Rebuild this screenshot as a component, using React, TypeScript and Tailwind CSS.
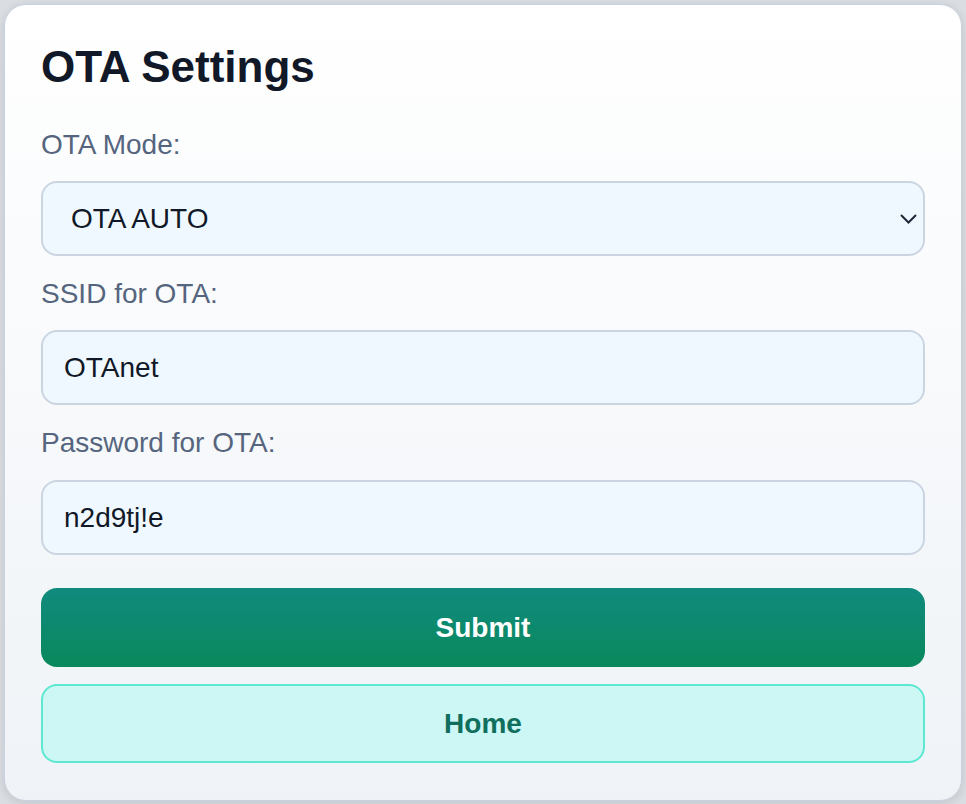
import { useState } from 'react'

export default function App() {
  const [mode, setMode] = useState('auto')
  const [ssid, setSsid] = useState('OTAnet')
  const [pass, setPass] = useState('n2d9tj!e')

  return (
    <div className="min-h-screen bg-[#dadde1] p-[4px] font-['Liberation_Sans',Arial,sans-serif]">
      <div className="flex flex-col rounded-[22px] border border-[#c9d3df] bg-gradient-to-b from-white to-[#eff3f7] px-[36px] pt-[36px] pb-[37px] shadow-[0_2px_10px_rgba(15,23,42,0.12)]">
        <h1 className="mb-[36px] text-[44px] leading-[52px] font-bold text-[#111827]">OTA Settings</h1>

        <label className="mb-[20px] text-[28px] leading-[32px] text-[#56657e]">OTA Mode:</label>
        <div className="relative mb-[22px]">
          <select
            value={mode}
            onChange={(e) => setMode(e.target.value)}
            className="h-[75px] w-full appearance-none rounded-[16px] border-2 border-[#cbd5e1] bg-[#f0f8ff] pl-[28px] text-[28px] text-[#111827] outline-none"
          >
            <option value="auto">OTA AUTO</option>
            <option value="manual">OTA MANUAL</option>
            <option value="off">OTA OFF</option>
          </select>
          <svg
            className="pointer-events-none absolute right-[8px] top-[29px] h-[17px] w-[17px] text-[#1f2937]"
            viewBox="0 0 17 17"
            fill="none"
            stroke="currentColor"
            strokeWidth="2"
          >
            <path d="M1 5l7.5 7.5L16 5" />
          </svg>
        </div>

        <label className="mb-[20px] text-[28px] leading-[32px] text-[#56657e]">SSID for OTA:</label>
        <input
          value={ssid}
          onChange={(e) => setSsid(e.target.value)}
          className="mb-[22px] h-[75px] w-full rounded-[16px] border-2 border-[#cbd5e1] bg-[#f0f8ff] px-[21px] text-[28px] text-[#111827] outline-none"
        />

        <label className="mb-[21px] text-[28px] leading-[32px] text-[#56657e]">Password for OTA:</label>
        <input
          value={pass}
          onChange={(e) => setPass(e.target.value)}
          className="mb-[33px] h-[75px] w-full rounded-[16px] border-2 border-[#cbd5e1] bg-[#f0f8ff] px-[21px] text-[28px] text-[#111827] outline-none"
        />

        <button className="mb-[17px] flex h-[79px] w-full items-center justify-center rounded-[16px] bg-gradient-to-b from-[#108a7e] to-[#0a895b] text-[28px] font-bold text-white">
          Submit
        </button>
        <button className="flex h-[79px] w-full items-center justify-center rounded-[16px] border-2 border-[#5ce8d1] bg-[#ccf7f5] text-[28px] font-bold text-[#0f6e5c]">
          Home
        </button>
      </div>
    </div>
  )
}
